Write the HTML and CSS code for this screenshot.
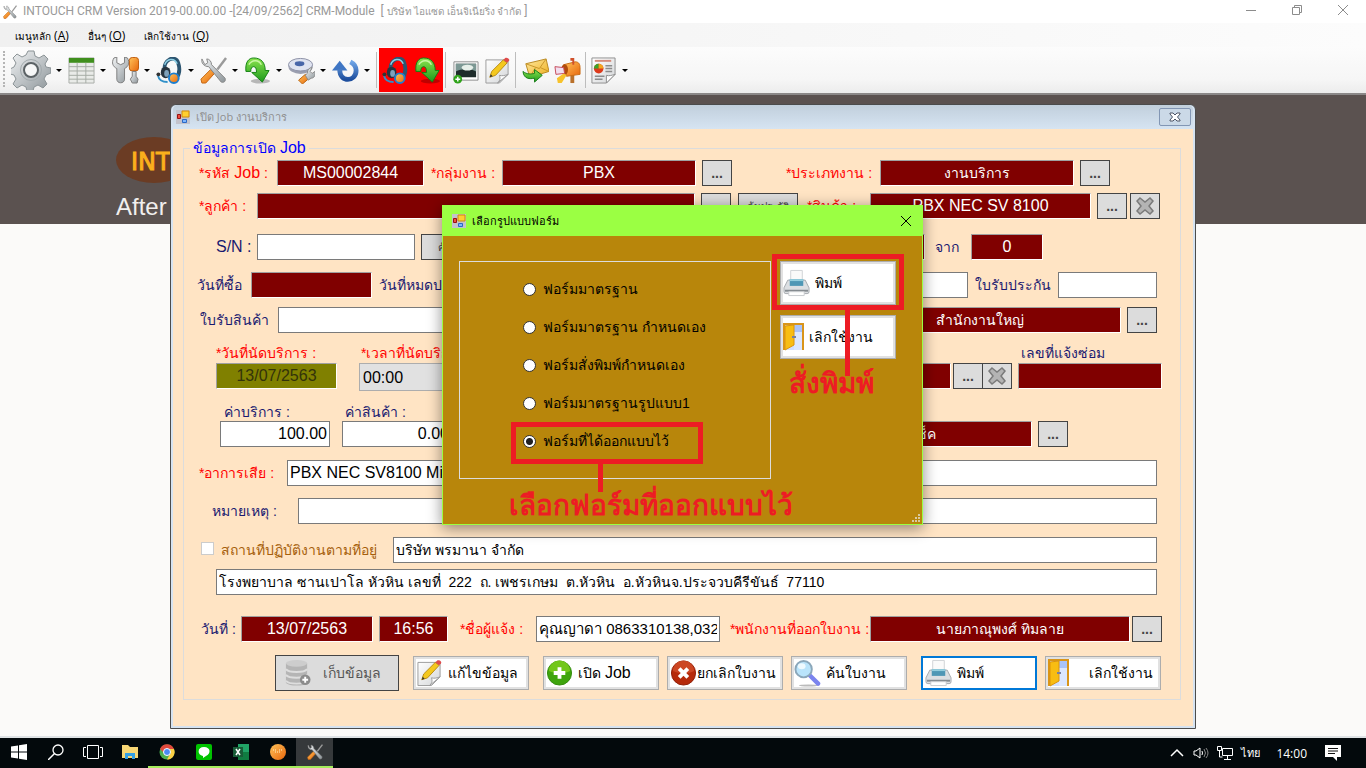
FILE: index.html
```
<!DOCTYPE html>
<html lang="th">
<head>
    <meta charset="utf-8">
    <title>INTOUCH CRM</title>
    <link rel="stylesheet" href="styles.css">
</head>
<body>
    <!-- icon set -->
    <svg class="sprite" aria-hidden="true">
        <defs>
            <linearGradient id="steel" x1="0" y1="0" x2="1" y2="1">
                <stop offset="0" stop-color="#f2f4f5"/><stop offset=".5" stop-color="#c0c5c8"/><stop offset="1" stop-color="#8c9498"/>
            </linearGradient>
            <linearGradient id="green" x1="0" y1="0" x2="0" y2="1">
                <stop offset="0" stop-color="#8be34d"/><stop offset="1" stop-color="#1c9a1c"/>
            </linearGradient>
            <linearGradient id="orange" x1="0" y1="0" x2="1" y2="1">
                <stop offset="0" stop-color="#ffc35a"/><stop offset="1" stop-color="#e8660b"/>
            </linearGradient>
            <linearGradient id="blue" x1="0" y1="0" x2="0" y2="1">
                <stop offset="0" stop-color="#6ea4e6"/><stop offset="1" stop-color="#1e4f9e"/>
            </linearGradient>
            <linearGradient id="gold" x1="0" y1="0" x2="1" y2="1">
                <stop offset="0" stop-color="#ffe9a0"/><stop offset="1" stop-color="#edae1c"/>
            </linearGradient>
            <linearGradient id="paper" x1="0" y1="0" x2="1" y2="1">
                <stop offset="0" stop-color="#ffffff"/><stop offset="1" stop-color="#d4d6d8"/>
            </linearGradient>
        </defs>
        <symbol id="i-gear" viewBox="0 0 40 40">
            <path d="M17 1h6l1 5 4 2 5-3 4 4-3 5 1 3 5 1v5l-5 2-2 4 3 5-4 4-5-3-4 2-1 4h-6l-1-4-4-2-5 3-4-4 3-5-2-4-4-1v-5l4-2 2-4-3-5 4-4 5 3 4-2z" fill="url(#steel)" stroke="#8b9396"/>
            <circle cx="20" cy="20" r="10.500" fill="none" stroke="#a2aaad" stroke-width="1"/>
            <circle cx="20" cy="20" r="7" fill="#f6f7f7" stroke="#5b6265" stroke-width="2"/>
        </symbol>
        <symbol id="i-table" viewBox="0 0 28 28">
            <path d="M1 1h26v26H1z" fill="#e9ebe8" stroke="#a9aca8"/>
            <path d="M1 1h26v5H1z" fill="#3f8f1d"/>
            <path d="M1 10h26M1 14.500h26M1 19h26M1 23h26M9.500 6v21M18.500 6v21" stroke="#a6aca4" fill="none"/>
        </symbol>
        <symbol id="i-wrench" viewBox="0 0 28 28">
            <path d="M2 1c-3 5-1 9 3 11v11c0 5 8 5 8 0V12c4-2 6-6 3-11l-3-1v6l-4 2-4-2V0z" fill="url(#steel)" stroke="#7d7d7d"/>
            <rect x="18" y="0.500" width="9.500" height="14" rx="3" fill="url(#orange)" stroke="#bd5a0a"/>
            <path d="M21 15h4v5l2 3-1 4h-5l-2-4 2-3z" fill="url(#steel)" stroke="#7d7d7d"/>
        </symbol>
        <symbol id="i-headset" viewBox="0 0 28 28">
            <path d="M9 14C7 3 20-3 23 6c2 6 2 11-2 16" fill="none" stroke="#2c5571" stroke-width="4"/>
            <path d="M9 8c2-6 10-8 13-1" fill="none" stroke="#8ed0e6" stroke-width="1.500"/>
            <ellipse cx="10" cy="16" rx="5" ry="6" fill="#27343f"/>
            <ellipse cx="11" cy="17" rx="2.500" ry="3.500" fill="#7fa1ba"/>
            <circle cx="18.500" cy="22" r="5" fill="url(#orange)" stroke="#1c7fd0" stroke-width="2"/>
            <path d="M2 19c1 5 5 7 10 7" fill="none" stroke="#3090c8" stroke-width="2"/>
            <circle cx="2.500" cy="18" r="2" fill="#333"/>
        </symbol>
        <symbol id="i-tools" viewBox="0 0 28 28">
            <path d="M27 1l-9 12" stroke="#9a9a9a" stroke-width="2.500"/>
            <path d="M2 27l-1-4 10-10 4 4L6 27z" fill="url(#orange)" stroke="#c4640f"/>
            <path d="M2 2C1 6 4 10 9 10l13 16c3 1 5-1 4-4L12 8c0-3-2-6-5-6l1 4-3 2z" fill="url(#steel)" stroke="#858585"/>
        </symbol>
        <symbol id="i-down" viewBox="0 0 28 28">
            <ellipse cx="17" cy="25" rx="10" ry="2.500" fill="#000" opacity=".25"/>
            <path d="M2 15C1 5 5 1 10 1c8 0 12 5 12 13h4l-7 12-11-10h5c0-4-1-6-3-6-2 0-3 2-3 5z" fill="url(#green)" stroke="#128112"/>
            <path d="M5 8c3-5 10-6 13 0" stroke="#c9f7a4" fill="none" stroke-width="1.500"/>
        </symbol>
        <symbol id="i-disk" viewBox="0 0 28 28">
            <ellipse cx="13" cy="10" rx="12.500" ry="7.500" fill="#9b9fb0"/>
            <ellipse cx="13" cy="8" rx="12.500" ry="6.500" fill="#dfe3f0" stroke="#8a8fa4"/>
            <ellipse cx="12" cy="7" rx="5" ry="2.500" fill="#4866a8"/>
            <path d="M11 24l7-6 4 4-7 6z" fill="url(#orange)" stroke="#b9640f"/>
            <path d="M18 19l2-2c0-4 2-6 5-6l-2 4 2 2 3-2c1 4-1 7-4 7l-3 2z" fill="url(#steel)" stroke="#8a8a8a"/>
        </symbol>
        <symbol id="i-refresh" viewBox="0 0 28 28">
            <path d="M0 14L8 4l8 10z" fill="#3f76c4"/>
            <path d="M8 13c0 14 17 13 17 1 0-4-2-7-6-9" fill="none" stroke="url(#blue)" stroke-width="5"/>
        </symbol>
        <symbol id="i-picture" viewBox="0 0 28 28">
            <path d="M2 5h25v19H2z" fill="#fff" stroke="#8d8d8d"/>
            <path d="M4 7h21v14H4z" fill="#1e2c2b"/>
            <path d="M4 15c5-3 16-3 21 0v-8H4z" fill="#7c9894"/>
            <ellipse cx="16" cy="11" rx="6" ry="3" fill="#e6efe9"/>
            <circle cx="6" cy="23" r="4.500" fill="#2fa31a"/>
            <path d="M6 20.500v5M3.500 23h5" stroke="#fff" stroke-width="1.500"/>
        </symbol>
        <symbol id="i-note" viewBox="0 0 28 28">
            <path d="M2 3h23v15l-9 9H2z" fill="url(#paper)" stroke="#9b9b9b"/>
            <path d="M14 27c3-3 3-5 2-8 3 1 6 0 9-1z" fill="#fff" stroke="#9b9b9b"/>
            <path d="M6 21l2-6L20 3l4 3-12 13z" fill="#f4c81e" stroke="#b98a10"/>
            <path d="M20 3l2-2c2-1 5 1 4 3l-2 2z" fill="#df4b4b"/>
            <path d="M6 21l1-3 2 2z" fill="#333"/>
        </symbol>
        <symbol id="i-mail" viewBox="0 0 28 28">
            <path d="M4 7l21-5 3 13-20 6z" fill="url(#gold)" stroke="#b88821"/>
            <path d="M4 7l14 5 7-10M8 21l6-10M28 15l-9-4" fill="none" stroke="#c89528"/>
            <path d="M1 15c1 8 7 8 12 7v4l8-7-8-6v4c-4 1-8 1-12-2z" fill="url(#green)" stroke="#187d18"/>
        </symbol>
        <symbol id="i-mailbox" viewBox="0 0 28 28">
            <path d="M17 18h4v9h-4z" fill="#b9702a"/>
            <path d="M10 8l12-3c4 0 5 3 5 6v7l-14 2z" fill="url(#orange)" stroke="#c96c14"/>
            <ellipse cx="11" cy="13" rx="3.500" ry="5.500" fill="#b14b0b"/>
            <path d="M17 1h4v7h-2V4h-2z" fill="#d0502b"/>
            <path d="M1 10l9 1 1 6-9 1z" fill="#f1dff0" stroke="#c64a59"/>
            <path d="M3 22l7-5 3 2-5 8H4z" fill="#f7c22b"/>
        </symbol>
        <symbol id="i-report" viewBox="0 0 28 28">
            <path d="M2 1h24v17l-9 9H2z" fill="url(#paper)" stroke="#8f8f8f"/>
            <path d="M17 27v-8c3 1 5 0 9-1z" fill="#fff" stroke="#8f8f8f"/>
            <path d="M5 4h17" stroke="#d58a7a" stroke-width="2"/>
            <circle cx="9" cy="12" r="5" fill="#dd3a1b"/>
            <path d="M9 12V7a5 5 0 0 0-5 5z" fill="#3da32a"/><path d="M9 12h5a5 5 0 0 0-5-5z" fill="#f3a61d"/>
            <path d="M16 9h7M16 12h7M16 15h7M5 20h10M5 23h8" stroke="#8c8c8c" stroke-width="1.500"/>
        </symbol>
        <symbol id="i-printer" viewBox="0 0 28 28">
            <path d="M8 1h12v10H8z" fill="#fafafa" stroke="#cfd2d5"/>
            <path d="M1 19l4-8h18l4 8v4q0 2-2 2H3q-2 0-2-2z" fill="#dcdfe2" stroke="#a4a9ae"/>
            <path d="M7 10h14v7H7z" fill="#4f97b5"/><path d="M7 10h14v2H7z" fill="#94cede"/>
            <path d="M2 22h24" stroke="#858b90" stroke-width="2"/>
            <path d="M6 23h16v4H6z" fill="#fff" stroke="#c9cccf"/>
        </symbol>
        <symbol id="i-door" viewBox="0 0 21 28">
            <path d="M1 27V1h19v26" fill="#cfdfff" stroke="#d9951a" stroke-width="2"/>
            <path d="M11 2h8v25h-8z" fill="#dbe7ff"/><path d="M11 2h8v7h-8z" fill="#a9c3fa"/>
            <path d="M2 3l9-1v20l-9 5z" fill="#f8bd12" stroke="#dc940b"/>
            <path d="M9 14h4" stroke="#7880a0" stroke-width="2"/>
        </symbol>
        <symbol id="i-db" viewBox="0 0 28 28">
            <path d="M2 4v20c3 4 19 4 22 0V4" fill="#b5b5b5"/>
            <path d="M2 10c3 4 19 4 22 0M2 16c3 4 19 4 22 0M2 22c3 4 19 4 22 0" fill="none" stroke="#dedede" stroke-width="2"/>
            <ellipse cx="13" cy="4" rx="11" ry="3.500" fill="#cdcdcd"/>
            <circle cx="22" cy="21" r="5.500" fill="#8c8c8c"/><path d="M22 18v6M19 21h6" stroke="#fff" stroke-width="2"/>
        </symbol>
        <symbol id="i-plus" viewBox="0 0 28 28">
            <circle cx="14" cy="14" r="12.500" fill="#3fa50e" stroke="#338a0c"/>
            <path d="M3 12a11 11 0 0 1 22 0c-6 3-15 3-22 0z" fill="#7fd01f" opacity=".8"/>
            <path d="M14 8v12M8 14h12" stroke="#fff" stroke-width="4"/>
        </symbol>
        <symbol id="i-cancel" viewBox="0 0 28 28">
            <circle cx="14" cy="14" r="12.500" fill="#b62a0a" stroke="#8f1e07"/>
            <path d="M3 12a11 11 0 0 1 22 0c-6 3-15 3-22 0z" fill="#d5532d" opacity=".7"/>
            <path d="M9.500 9.500l9 9M18.500 9.500l-9 9" stroke="#fff" stroke-width="4"/>
        </symbol>
        <symbol id="i-search" viewBox="0 0 28 28">
            <ellipse cx="15" cy="27" rx="10" ry="1" fill="#bbb"/>
            <path d="M16 16l9 9" stroke="#7b84ee" stroke-width="4.500" stroke-linecap="round"/>
            <circle cx="10" cy="10" r="8.500" fill="#b9e4fb" stroke="#8ba7ba" stroke-width="2"/>
            <ellipse cx="8" cy="7" rx="4" ry="3" fill="#eefaff"/>
        </symbol>
        <symbol id="i-x" viewBox="0 0 18 18">
            <path d="M4 1l5 4 5-4 3 3-4 5 4 5-3 3-5-4-5 4-3-3 4-5-4-5z" fill="#b4b4b4" stroke="#7b7b7b" stroke-width="1.500"/>
        </symbol>
        <symbol id="i-form" viewBox="0 0 14 14">
            <path d="M0 0h14v14H0z" fill="#c3c3cc"/>
            <path d="M6 1h7v6H6z" fill="#ffcf30" stroke="#cf8b0c"/>
            <path d="M1.500 4.500h3v4h-3z" fill="#ef4d3d" stroke="#981212"/>
            <path d="M6.500 9.500h4v3h-4z" fill="#7db6ff" stroke="#2c68c4"/>
        </symbol>
    </svg>

    <header class="app-title">
        <svg class="app-icon"><use href="#i-tools"/></svg>
        <span>INTOUCH CRM Version 2019-00.00.00 -[24/09/2562] CRM-Module&nbsp; [ <span class="th">บริษัท ไอแซด เอ็นจิเนียริ่ง จำกัด</span> ]</span>
        <div class="win-controls">
            <button aria-label="Minimize"><svg viewBox="0 0 12 12"><path d="M1 6.500h10"/></svg></button>
            <button aria-label="Restore"><svg viewBox="0 0 12 12"><path d="M1.500 3.500h7v7h-7zM3.500 3.500v-2h7v7h-2"/></svg></button>
            <button aria-label="Close"><svg viewBox="0 0 12 12"><path d="M1 1l10 10M11 1L1 11"/></svg></button>
        </div>
    </header>

    <nav class="menu">
        <a href="#"><span class="th">เมนูหลัก</span> (<u>A</u>)</a>
        <a href="#"><span class="th">อื่นๆ</span> (<u>O</u>)</a>
        <a href="#"><span class="th">เลิกใช้งาน</span> (<u>Q</u>)</a>
    </nav>

    <div class="toolbar">
        <button class="tool split gear" aria-label="Settings"><svg><use href="#i-gear"/></svg></button>
        <button class="tool split" aria-label="Table"><svg><use href="#i-table"/></svg></button>
        <button class="tool split" aria-label="Service"><svg><use href="#i-wrench"/></svg></button>
        <button class="tool split" aria-label="Support"><svg><use href="#i-headset"/></svg></button>
        <button class="tool split" aria-label="Tools"><svg><use href="#i-tools"/></svg></button>
        <button class="tool split" aria-label="Import"><svg><use href="#i-down"/></svg></button>
        <button class="tool split" aria-label="Disk"><svg><use href="#i-disk"/></svg></button>
        <button class="tool split" aria-label="Refresh"><svg><use href="#i-refresh"/></svg></button>
        <i class="sep"></i>
        <button class="tool hot" aria-label="Open job"><svg><use href="#i-headset"/></svg></button>
        <button class="tool hot" aria-label="Receive"><svg><use href="#i-down"/></svg></button>
        <i class="sep"></i>
        <button class="tool" aria-label="Picture"><svg><use href="#i-picture"/></svg></button>
        <button class="tool" aria-label="Note"><svg><use href="#i-note"/></svg></button>
        <i class="sep"></i>
        <button class="tool" aria-label="Send mail"><svg><use href="#i-mail"/></svg></button>
        <button class="tool" aria-label="Mailbox"><svg><use href="#i-mailbox"/></svg></button>
        <i class="sep"></i>
        <button class="tool split" aria-label="Report"><svg><use href="#i-report"/></svg></button>
    </div>

    <main class="mdi">
        <div class="banner">
            <div class="logo">INTOUCH</div>
            <div class="slogan">After</div>
        </div>

        <!-- job window -->
        <section class="job">
            <div class="job-title">
                <svg class="form-icon"><use href="#i-form"/></svg>
                <span>เปิด Job งานบริการ</span>
                <button class="job-close" aria-label="Close"><svg viewBox="0 0 12 10"><path d="M1 1h3l2 2 2-2h3v1L8.500 5 11 8v1H8L6 7 4 9H1V8l2.500-3L1 2z"/></svg></button>
            </div>
            <form class="job-body">
                <fieldset class="group">
                    <legend>ข้อมูลการเปิด <span class="lat">Job</span></legend>
                    <div class="rows">
                        <div class="row r-code">
                            <label class="req" for="code">*รหัส <span class="lat">Job</span> :</label>
                            <input class="dark" id="code" value="MS00002844" readonly>
                            <label class="req" for="grp">*กลุ่มงาน :</label>
                            <input class="dark" id="grp" value="PBX" readonly>
                            <button type="button" class="btn">...</button>
                            <label class="req" for="type">*ประเภทงาน :</label>
                            <input class="dark thai" id="type" value="งานบริการ" readonly>
                            <button type="button" class="btn">...</button>
                        </div>
                        <div class="row r-cust">
                            <label class="req" for="cust">*ลูกค้า :</label>
                            <input class="dark" id="cust" readonly>
                            <button type="button" class="btn">...</button>
                            <button type="button" class="btn small">ค้นประวัติ</button>
                            <label class="req" for="prod">*สินค้า :</label>
                            <input class="dark" id="prod" value="PBX NEC SV 8100" readonly>
                            <button type="button" class="btn">...</button>
                            <button type="button" class="btn" aria-label="Clear"><svg><use href="#i-x"/></svg></button>
                        </div>
                        <div class="row r-sn">
                            <label for="sn"><span class="lat">S/N :</span></label>
                            <input id="sn">
                            <button type="button" class="btn small">ค้นหา</button>
                            <input class="dark" aria-label="จำนวน" readonly>
                            <label for="from">จาก</label>
                            <input class="dark" id="from" value="0" readonly>
                        </div>
                        <div class="row r-buy">
                            <label for="buy">วันที่ซื้อ</label>
                            <input class="dark" id="buy" readonly>
                            <label for="exp">วันที่หมดประกัน</label>
                            <input id="exp">
                            <label for="war">ใบรับประกัน</label>
                            <input id="war">
                        </div>
                        <div class="row r-recv">
                            <label for="recv">ใบรับสินค้า</label>
                            <input id="recv">
                            <input class="dark thai" aria-label="สาขา" value="สำนักงานใหญ่" readonly>
                            <button type="button" class="btn">...</button>
                        </div>
                        <div class="row r-datelabels">
                            <label class="req" for="date">*วันที่นัดบริการ :</label>
                            <label class="req" for="time">*เวลาที่นัดบริการ :</label>
                            <label for="repair">เลขที่แจ้งซ่อม</label>
                        </div>
                        <div class="row r-date">
                            <input class="dark olive" id="date" value="13/07/2563" readonly>
                            <select id="time"><option>00:00</option></select>
                            <input class="dark" aria-label="ผู้ให้บริการ" readonly>
                            <button type="button" class="btn">...</button>
                            <button type="button" class="btn" aria-label="Clear"><svg><use href="#i-x"/></svg></button>
                            <input class="dark" id="repair" readonly>
                        </div>
                        <div class="row r-feelabels">
                            <label for="fee">ค่าบริการ :</label>
                            <label for="goods">ค่าสินค้า :</label>
                        </div>
                        <div class="row r-fee">
                            <input class="num" id="fee" value="100.00">
                            <input class="num" id="goods" value="0.00">
                            <input class="dark thai" id="status" aria-label="สถานะ" value="รอเช็ค" readonly>
                            <button type="button" class="btn">...</button>
                        </div>
                        <div class="row r-symptom">
                            <label class="req" for="sym">*อาการเสีย :</label>
                            <input id="sym" value="PBX NEC SV8100 Mic">
                        </div>
                        <div class="row r-remark">
                            <label for="rem">หมายเหตุ :</label>
                            <input id="rem">
                        </div>
                        <div class="row r-place">
                            <input type="checkbox" id="place" disabled>
                            <label class="brown" for="place">สถานที่ปฏิบัติงานตามที่อยู่</label>
                            <input class="thai" aria-label="ชื่อสถานที่" value="บริษัท พรมานา จำกัด">
                        </div>
                        <div class="row r-addr">
                            <input class="thai" aria-label="ที่อยู่" value="โรงพยาบาล ซานเปาโล หัวหิน เลขที่  222  ถ. เพชรเกษม  ต.หัวหิน  อ.หัวหินจ.ประจวบคีรีขันธ์  77110">
                        </div>
                        <div class="row r-who">
                            <label for="day">วันที่ :</label>
                            <input class="dark" id="day" value="13/07/2563" readonly>
                            <input class="dark" id="hour" aria-label="เวลา" value="16:56" readonly>
                            <label class="req" for="caller">*ชื่อผู้แจ้ง :</label>
                            <input id="caller" value="คุณญาดา 0863310138,032">
                            <label class="req" for="staff">*พนักงานที่ออกใบงาน :</label>
                            <input class="dark thai" id="staff" value="นายภาณุพงศ์ ทิมลาย" readonly>
                            <button type="button" class="btn">...</button>
                        </div>
                        <div class="actions">
                            <button type="button" class="action save" disabled><svg><use href="#i-db"/></svg><span>เก็บข้อมูล</span></button>
                            <button type="button" class="action"><svg><use href="#i-note"/></svg><span>แก้ไขข้อมูล</span></button>
                            <button type="button" class="action"><svg><use href="#i-plus"/></svg><span>เปิด <span class="lat">Job</span></span></button>
                            <button type="button" class="action tight"><svg><use href="#i-cancel"/></svg><span>ยกเลิกใบงาน</span></button>
                            <button type="button" class="action"><svg><use href="#i-search"/></svg><span>ค้นใบงาน</span></button>
                            <button type="button" class="action focus"><svg><use href="#i-printer"/></svg><span>พิมพ์</span></button>
                            <button type="button" class="action exit"><svg><use href="#i-door"/></svg><span>เลิกใช้งาน</span></button>
                        </div>
                    </div>
                </fieldset>
            </form>
        </section>

        <!-- form picker dialog -->
        <section class="dialog">
            <div class="dialog-title">
                <svg class="form-icon"><use href="#i-form"/></svg>
                <span>เลือกรูปแบบฟอร์ม</span>
                <button class="dialog-close" aria-label="Close"><svg viewBox="0 0 12 12"><path d="M1 1l10 10M11 1L1 11"/></svg></button>
            </div>
            <div class="dialog-body">
                <div class="choices">
                    <label><input type="radio" name="form">ฟอร์มมาตรฐาน</label>
                    <label><input type="radio" name="form">ฟอร์มมาตรฐาน กำหนดเอง</label>
                    <label><input type="radio" name="form">ฟอร์มสั่งพิมพ์กำหนดเอง</label>
                    <label><input type="radio" name="form">ฟอร์มมาตรฐานรูปแบบ1</label>
                    <label><input type="radio" name="form" checked>ฟอร์มที่ได้ออกแบบไว้</label>
                </div>
                <div class="dialog-buttons">
                    <button class="action"><svg><use href="#i-printer"/></svg><span>พิมพ์</span></button>
                    <button class="action exit"><svg><use href="#i-door"/></svg><span>เลิกใช้งาน</span></button>
                </div>
            </div>
            <svg class="resize" viewBox="0 0 8 8"><path d="M6 0h2v2H6zM6 3h2v2H6zM3 3h2v2H3zM6 6h2v2H6zM3 6h2v2H3zM0 6h2v2H0z" fill="#d9c9a0"/></svg>

            <!-- red callouts -->
            <div class="mark mark-print"></div>
            <div class="stem stem-print"></div>
            <div class="note note-print">สั่งพิมพ์</div>
            <div class="mark mark-form"></div>
            <div class="stem stem-form"></div>
            <div class="note note-form">เลือกฟอร์มที่ออกแบบไว้</div>
        </section>
    </main>

    <footer class="taskbar">
        <button class="task" aria-label="Start"><svg viewBox="0 0 16 16"><path d="M0 2.500l7-1v6H0zM8 1.300L16 0v7.500H8zM0 8.500h7v6l-7-1zM8 8.500h8V16l-8-1.300z" fill="#fff"/></svg></button>
        <button class="task" aria-label="Search"><svg viewBox="0 0 16 16"><circle cx="10" cy="6" r="5" fill="none" stroke="#fff" stroke-width="1.300"/><path d="M6.500 9.500L0 16" stroke="#fff" stroke-width="1.500"/></svg></button>
        <button class="task" aria-label="Task view"><svg class="wide" viewBox="0 0 20 16"><path d="M4.500 1.500h11v13h-11zM3 3.500H.5v9H3M17 3.500h2.500v9H17" fill="none" stroke="#fff"/></svg></button>
        <button class="task" aria-label="Explorer"><svg viewBox="0 0 16 16"><path d="M0 1h6l2 2h8v11H0z" fill="#f8d775"/><path d="M3 15V9h10v6h-3v-3H6v3z" fill="#35a0e4"/></svg></button>
        <button class="task open" aria-label="Chrome"><svg viewBox="0 0 16 16"><circle cx="8" cy="8" r="7.500" fill="#4caf50"/><path d="M1 5a7.500 7.500 0 0 1 14 0H8L5 9z" fill="#e0483c"/><path d="M15 5a7.500 7.500 0 0 1-7 10.500L11.500 9 11 5z" fill="#fbd045"/><circle cx="8" cy="8" r="3.500" fill="#4a8af4" stroke="#fff"/></svg></button>
        <button class="task open" aria-label="LINE"><svg viewBox="0 0 16 16"><rect width="16" height="16" rx="2" fill="#00c300"/><path d="M8 3c7 0 7 7 2 9l-3 2v-2C1 11 1 3 8 3z" fill="#fff"/></svg></button>
        <button class="task open" aria-label="Excel"><svg viewBox="0 0 16 16"><path d="M5 0h11v16H5z" fill="#21a366"/><path d="M5 8h11v8H5z" fill="#107c41"/><path d="M0 3h10v10H0z" fill="#185c37"/><path d="M3 5l4 6M7 5l-4 6" stroke="#fff" stroke-width="1.500"/></svg></button>
        <button class="task open" aria-label="Orange"><svg viewBox="0 0 16 16"><circle cx="8" cy="8" r="8" fill="url(#orange)"/><path d="M3 6h4M9 6h4M5 8h6" stroke="#fff2c8" stroke-dasharray="1 1"/></svg></button>
        <button class="task open current" aria-label="INTOUCH CRM"><svg viewBox="0 0 28 28"><use href="#i-tools"/></svg></button>
        <div class="tray">
            <svg viewBox="0 0 16 16"><path d="M2 11l6-6 6 6" fill="none" stroke="#fff" stroke-width="1.500"/></svg>
            <svg viewBox="0 0 16 16"><path d="M1 6v4h2l4 3V3L3 6z" fill="none" stroke="#fff"/><path d="M9 6q1 2 0 4" fill="none" stroke="#fff"/><path d="M11 4q3 4 0 8M13 3q4 5 0 10" fill="none" stroke="#888"/></svg>
            <svg viewBox="0 0 16 16"><path d="M5.500 3.500h10v7h-10zM10.500 11v3M7 14.500h7M.5 1.500h4v4h-4zM2.500 6v6h3" fill="none" stroke="#fff"/></svg>
            <span class="lang">ไทย</span>
            <span class="clock">14:00</span>
            <svg viewBox="0 0 16 16"><path d="M0 0h16v12h-4v4l-4-4H0z" fill="#fff"/><path d="M3 3.500h10M3 6h10M3 8.500h7" stroke="#111"/></svg>
        </div>
    </footer>
</body>
</html>
```
FILE: styles.css
```
* {
    box-sizing: border-box;
}

body {
    margin: 0;
    height: 100vh;
    display: flex;
    flex-direction: column;
    overflow: hidden;
    font-family: "Liberation Sans", sans-serif;
    font-size: 14px;
    background: #fbfaf9;
}

button, input, select {
    font: inherit;
    margin: 0;
    min-width: 0;
}

button {
    padding: 0;
    border: 0;
    background: none;
}

.sprite {
    position: absolute;
    width: 0;
    height: 0;
}

.lat {
    font-size: 16px;
}

.th {
    font-size: 10px;
}

/* main window */
.app-title {
    height: 23px;
    display: flex;
    align-items: center;
    gap: 6px;
    padding-left: 3px;
    background: #fff;
    color: #999;
    font-family: Roboto, "Liberation Sans", sans-serif;
    font-size: 12px;
    white-space: nowrap;
}

.app-icon {
    width: 14px;
    height: 14px;
}

.win-controls {
    margin-left: auto;
    display: flex;
}

.win-controls button {
    width: 46px;
    height: 22px;
}

.win-controls svg {
    width: 12px;
    height: 12px;
    fill: none;
    stroke: #8c8c8c;
}

.menu {
    height: 24px;
    display: flex;
    align-items: center;
    gap: 19px;
    padding-left: 15px;
    background: linear-gradient(to right, #f0f0f0, #fcfcfc);
    font-family: "Open Sans", "Liberation Sans", sans-serif;
    font-size: 12px;
}

.menu a {
    color: #000;
    text-decoration: none;
}

.toolbar {
    height: 48px;
    display: flex;
    align-items: center;
    padding-left: 11px;
    background: linear-gradient(#fcfcfc, #f6f6f6 70%, #ececec);
    border-bottom: 2px solid #8b8888;
    position: relative;
}

.toolbar::before {
    content: "";
    position: absolute;
    left: 3px;
    top: 4px;
    height: 36px;
    border-left: 2px dotted #b5b5b5;
}

.tool {
    width: 32px;
    height: 44px;
    display: flex;
    align-items: center;
    justify-content: center;
}

.tool svg {
    width: 27px;
    height: 27px;
}

.split {
    width: 44px;
    justify-content: space-between;
    padding: 0 5px 0 1px;
}

.split::after {
    content: "";
    border: 3px solid transparent;
    border-top-color: #000;
    border-bottom: 0;
}

.gear {
    width: 56px;
    padding-left: 0;
}

.gear svg {
    width: 40px;
    height: 40px;
}

.hot {
    background: #f00;
}

.sep {
    width: 2px;
    height: 36px;
    margin: 0 2px;
    border-left: 1px solid #bdbdbd;
}

.split + .sep {
    margin: 0 1px;
}

.mdi {
    flex: 1;
    position: relative;
    border-bottom: 2px solid #dfe3e6;
}

.banner {
    height: 129px;
    padding: 42px 0 0 116px;
    background: #5b5250;
}

.logo {
    width: 76px;
    height: 46px;
    padding-left: 15px;
    border-radius: 50%;
    background: #6b3c24;
    color: #fbb01c;
    font-family: "DejaVu Sans", sans-serif;
    font-size: 24px;
    line-height: 50px;
    -webkit-text-stroke: 1px #fbb01c;
}

.slogan {
    margin-top: 12px;
    color: #f1efee;
    font-size: 24px;
    line-height: 24px;
}

/* job window */
.job {
    position: absolute;
    left: 170px;
    top: 9px;
    width: 1026px;
    border: 1px solid #4c4c4c;
    border-radius: 6px 6px 0 0;
    background: #d6e3f1;
    padding: 0 2px 2px;
}

.job-title {
    height: 24px;
    display: flex;
    align-items: center;
    gap: 6px;
    padding: 0 2px 0 3px;
    border-radius: 5px 5px 0 0;
    background: linear-gradient(#c1cfdc, #d6e4f2);
    color: #8f8f8f;
    font-family: "Open Sans", "Liberation Sans", sans-serif;
    font-size: 11px;
}

.form-icon {
    width: 14px;
    height: 14px;
}

.job-close {
    width: 32px;
    height: 18px;
    margin-left: auto;
    border: 1px solid #8296b4;
    border-radius: 2px;
    background: #cbd9e7;
    line-height: 0;
}

.job-close svg {
    width: 12px;
    height: 10px;
    fill: #fff;
    stroke: #4d5566;
}

.job-body {
    padding: 8px 12px 26px 10px;
    background: #ffe4c4;
}

.group {
    margin: 0;
    padding: 1px 18px 8px 13px;
    border: 1px solid #dcdcdc;
}

.group legend {
    margin-left: -7px;
    padding: 0 3px;
    color: #00f;
    line-height: 22px;
}

.rows {
    display: grid;
    grid-template-rows: 33px 41px 38px 35px 33px 23px 36px 22px 39px 38px 39px 32px 47px 39px 36px;
}

.row {
    display: grid;
    height: 26px;
    align-items: stretch;
}

.row label {
    color: #191970;
    line-height: 26px;
    white-space: nowrap;
}

.row .req {
    color: #f00;
}

.row .brown {
    color: #a65f0c;
}

.row input, .row select {
    width: 100%;
    height: 26px;
    padding: 0 2px;
    border: 1px solid #7a7a7a;
    border-radius: 0;
    background: #fff;
    color: #000;
    font-size: 16px;
}

.row .dark {
    border-color: #a0a0a0 #fff #fff #a0a0a0;
    background: #800000;
    color: #fff;
    text-align: center;
}

.row .olive {
    background: #808000;
    color: #33330a;
}

.row .thai {
    font-size: 14px;
}

.row .num {
    text-align: right;
}

.row select {
    appearance: none;
    height: 28px;
    padding: 0 3px;
    border-color: #adadad;
    background: #e1e1e1;
}

.row input[type="checkbox"] {
    appearance: none;
    width: 13px;
    height: 13px;
    margin-top: 5px;
    border: 1px solid #ccc;
}

.btn {
    width: 30px;
    height: 26px;
    display: flex;
    align-items: center;
    justify-content: center;
    border: 1px solid #444;
    background: #dcdcdc;
    color: #444;
    font-weight: bold;
}

.btn svg {
    width: 18px;
    height: 18px;
}

.small {
    width: 60px;
    font-weight: normal;
    font-size: 10px;
}

.row input + .btn {
    margin-left: 6px;
}

.row.r-date input + .btn,
.row.r-who input + .btn {
    margin-left: 2px;
}

/* column widths, row by row */
.r-code { grid-template-columns: 80px 147px 78px 194px 90px 94px 194px 36px; }
.r-cust { grid-template-columns: 60px 438px 43px 67px 65px 221px 39px 30px; }
.r-sn { grid-template-columns: 41px 158px 66px 444px 46px 72px; padding-left: 19px; }
.r-buy { grid-template-columns: 54px 121px 118px 478px 90px 99px; }
.r-recv { grid-template-columns: 78px 560px 283px 36px; padding-left: 3px; }
.r-datelabels { grid-template-columns: 145px 660px 140px; padding-left: 19px; }
.r-date { grid-template-columns: 121px 22px 161px 431px 31px 30px 6px 144px; padding-left: 19px; }
.r-feelabels { grid-template-columns: 121px 100px; padding-left: 27px; }
.r-fee { grid-template-columns: 110px 12px 110px 348px 232px 36px; padding-left: 23px; }
.r-symptom { grid-template-columns: 90px 870px; }
.r-remark { grid-template-columns: 86px 859px; padding-left: 15px; }
.r-place { grid-template-columns: 20px 172px 764px; padding-left: 4px; }
.r-addr { grid-template-columns: 941px; padding-left: 19px; }
.r-who { grid-template-columns: 40px 132px 6px 69px 88px 184px 150px 260px 32px; padding-left: 4px; }

#time, #goods { grid-column: 3; }
#hour { grid-column: 4; }
#status { grid-column: 5; }
#repair { grid-column: 8; }

.r-code label, .r-cust label, .r-symptom label { padding-left: 2px; }
.r-code label[for="type"] { padding-left: 0; }
.r-code label[for="grp"], .r-buy label[for="exp"], .r-buy label[for="war"] { padding-left: 7px; }
.r-sn label[for="from"], .r-who label[for="staff"] { padding-left: 10px; }
.r-who label[for="caller"] { padding-left: 12px; }

.row #caller {
    font-size: 15px;
}

.actions {
    display: grid;
    grid-template-columns: 138px 130px 124px 124px 130px 124px 116px;
    align-items: center;
    padding-left: 78px;
}

.action {
    width: 116px;
    height: 34px;
    display: flex;
    align-items: center;
    gap: 5px;
    padding: 0 0 0 2px;
    border: 1px solid #adadad;
    outline: 2px solid #e1e1e1;
    outline-offset: -3px;
    background: #fff;
    color: #000;
    white-space: nowrap;
}

.action svg {
    width: 27px;
    height: 28px;
    flex: none;
}

.save {
    width: 124px;
    height: 36px;
    gap: 12px;
    padding-left: 8px;
    border-color: #444;
    outline: 0;
    background: #dcdcdc;
    color: #555;
}

.tight {
    gap: 0;
}

.focus {
    border: 2px solid #0078d7;
    outline: 0;
}

.exit svg {
    width: 21px;
}

.actions .exit {
    justify-content: space-between;
    padding-right: 7px;
}

/* form picker */
.dialog {
    position: absolute;
    left: 442px;
    top: 110px;
    width: 481px;
    height: 320px;
    border: 1px solid #9bff43;
    background: #b8860b;
    box-shadow: 0 3px 14px rgba(0, 0, 0, .45);
}

.dialog-title {
    height: 30px;
    display: flex;
    align-items: center;
    gap: 6px;
    padding: 0 10px 0 9px;
    background: #9bff43;
    font-family: "Open Sans", "Liberation Sans", sans-serif;
    font-size: 11px;
}

.dialog-close {
    margin-left: auto;
    line-height: 0;
}

.dialog-close svg {
    width: 12px;
    height: 12px;
    stroke: #000;
}

.dialog-body {
    display: flex;
    align-items: flex-start;
    gap: 9px;
    padding: 25px 16px;
}

.choices {
    width: 312px;
    height: 218px;
    display: grid;
    grid-auto-rows: 38px;
    padding: 8px 0 0 63px;
    border: 1px solid #dcdcdc;
}

.choices label {
    display: flex;
    align-items: center;
    gap: 7px;
}

.choices input {
    appearance: none;
    width: 13px;
    height: 13px;
    border: 1px solid #333;
    border-radius: 50%;
    background: #fff;
}

.choices input:checked {
    background: radial-gradient(circle, #222 3px, #fff 4px);
}

.dialog-buttons {
    display: grid;
    gap: 10px;
}

.dialog-buttons .action {
    height: 44px;
}

.resize {
    position: absolute;
    right: 2px;
    bottom: 2px;
    width: 8px;
    height: 8px;
}

.mark {
    position: absolute;
    border: 5px solid #ed1c24;
}

.mark-print { left: 329px; top: 48px; width: 132px; height: 56px; }
.mark-form { left: 68px; top: 216px; width: 192px; height: 42px; }

.stem {
    position: absolute;
    width: 5px;
    background: #ed1c24;
}

.stem-print { left: 402px; top: 104px; height: 66px; }
.stem-form { left: 155px; top: 258px; height: 28px; }

.note {
    position: absolute;
    color: #ed1c24;
    font-size: 28px;
    font-weight: bold;
    line-height: 32px;
    white-space: nowrap;
}

.note-print { left: 346px; top: 162px; }
.note-form { left: 66px; top: 284px; }

/* taskbar */
.taskbar {
    height: 30px;
    display: flex;
    background: #03090c;
    color: #fff;
}

.task {
    width: 37px;
    display: flex;
    align-items: center;
    justify-content: center;
    border-bottom: 2px solid transparent;
}

.task svg {
    width: 16px;
    height: 16px;
}

.task .wide {
    width: 20px;
}

.open {
    border-bottom-color: #a5ec5c;
}

.current {
    background: #36393b;
}

.tray {
    margin-left: auto;
    display: flex;
    align-items: center;
    gap: 8px;
    padding-right: 25px;
    font-family: "Open Sans", "Liberation Sans", sans-serif;
    font-size: 12px;
}

.tray svg {
    width: 16px;
    height: 16px;
}

.lang {
    font-size: 11px;
}

.clock {
    margin: 0 10px 0 8px;
}
```
